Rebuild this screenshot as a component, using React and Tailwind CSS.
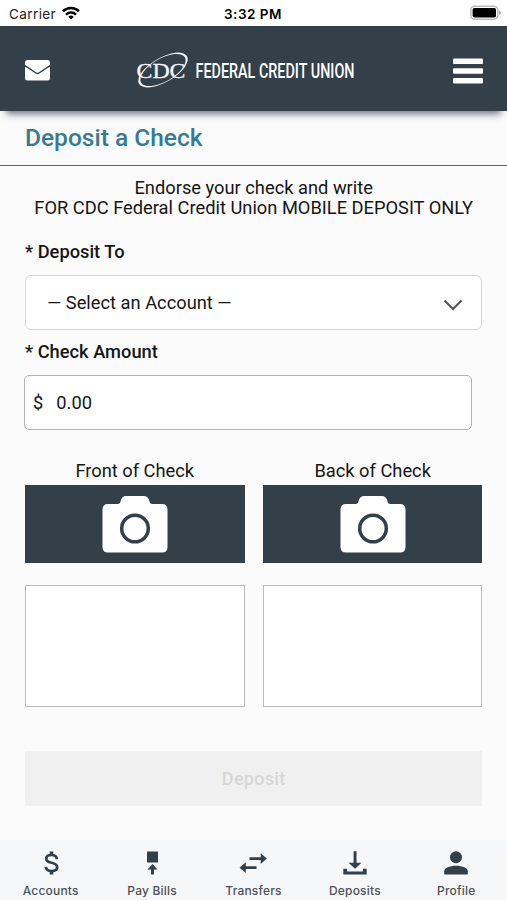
import { useState } from 'react'

const TABS = [
  { label: 'Accounts', icon: DollarIcon },
  { label: 'Pay Bills', icon: PayIcon },
  { label: 'Transfers', icon: TransferIcon },
  { label: 'Deposits', icon: DepositIcon },
  { label: 'Profile', icon: ProfileIcon },
]

function DollarIcon() {
  return (
    <svg width="24" height="24" viewBox="0 0 24 24" fill="none" stroke="currentColor" strokeWidth="2.7">
      <path d="M18 8.200C17.600 5.400 15.400 4 12.500 4 9.300 4 7.200 5.500 7.200 7.800c0 2.300 2 3.200 5.300 4 3.400.8 5.700 1.900 5.700 4.400 0 2.500-2.400 3.800-5.600 3.800-3.400 0-5.500-1.500-5.800-4.200" />
      <path d="M12.500.4v3.800M12.500 19.800v3.800" strokeWidth="3.6" />
    </svg>
  )
}

function PayIcon() {
  return (
    <svg width="24" height="24" viewBox="0 0 24 24" fill="currentColor">
      <path d="M7 .5h11v11H7zM12.500 13l5 5.500H14v5h-3v-5H7.500z" />
    </svg>
  )
}

function TransferIcon() {
  return (
    <svg width="30" height="24" viewBox="0 0 30 24" fill="currentColor">
      <path d="M11.500 6.200h11.200V2.200L28.800 7.600l-6.100 5.400V9.100H11.500zM18.500 15.200H7.800v-4L1.500 16.700l6.300 5.400v-4h10.700z" />
    </svg>
  )
}

function DepositIcon() {
  return (
    <svg width="24" height="24" viewBox="0 0 24 24" fill="currentColor">
      <path d="M10.600.3h2.900v11.500h5L12 17.700l-6.500-5.900h5.100zM.3 17.800h3.800v2.600h15.800v-2.600h3.800v5.700H.3z" />
    </svg>
  )
}

function ProfileIcon() {
  return (
    <svg width="24" height="24" viewBox="0 0 24 24" fill="currentColor">
      <circle cx="12" cy="6.2" r="6" />
      <path d="M.2 23.500v-3.300c0-3.200 5.300-5.500 11.800-5.500s11.800 2.300 11.800 5.500v3.300z" />
    </svg>
  )
}

function CameraIcon() {
  return (
    <svg width="66" height="58" viewBox="0 0 66 58">
      <path
        fill="#fff"
        d="M6 9h9.500c2 0 2.700-1 3-2.500C19 3 21 1 24.500 1h17C45 1 47 3 47.500 6.500 47.800 8 48.500 9 50.500 9H60q5.500 0 5.500 5.500v37.500q0 5.500-5.500 5.500H6q-5.500 0-5.500-5.500v-37.500Q.5 9 6 9z"
      />
      <circle cx="33" cy="33.5" r="13.3" fill="none" stroke="#333f49" strokeWidth="3.5" />
    </svg>
  )
}

function StatusBar() {
  return (
    <div className="grid h-[26px] grid-cols-3 items-center bg-white pr-1.5 pl-[9px] text-black">
      <div className="flex items-center gap-1.5">
        <span className="pt-0.5 font-[Inter] text-[13.5px] leading-5 tracking-[0.4px] text-[#222]">Carrier</span>
        <svg width="18" height="14" viewBox="0 0 18 14" fill="none" stroke="#000">
          <path d="M1 5.200a11.500 11.500 0 0 1 16 0" strokeWidth="2.6" />
          <path d="M4 8.600a7.200 7.200 0 0 1 10 0" strokeWidth="2.5" />
          <path d="M9 13.500 6.300 10.800a4 4 0 0 1 5.400 0z" fill="#000" stroke="none" />
        </svg>
      </div>
      <span className="pt-0.5 pr-1 text-center font-[Inter] text-[13.5px] leading-5 font-semibold tracking-[0.5px]">3:32 PM</span>
      <svg className="justify-self-end" width="32" height="16" viewBox="0 0 32 16">
        <rect x="1.8" y="1.2" width="27" height="13" rx="3.8" fill="#fff" stroke="#bbb" strokeWidth="1.5" />
        <rect x="3.6" y="3" width="23.4" height="9.5" rx="1.8" fill="#000" />
        <path d="M30 5.500q2 .8 2 2.300t-2 2.300z" fill="#aaa" />
      </svg>
    </div>
  )
}

function Header() {
  return (
    <header className="flex h-[85px] items-center justify-between bg-[#333f49] pt-1 pr-6 pl-[25px] shadow-[0_9px_7px_-6px_#6f7780]">
      <svg width="25" height="21" viewBox="0 0 25 21">
        <rect width="25" height="20.5" rx="2.5" fill="#fff" />
        <path d="M0 5.500 11 13q1.500 1 3 0L25 5.500" fill="none" stroke="#333f49" strokeWidth="1.5" />
      </svg>
      <svg className="mr-2 overflow-visible" width="230" height="42" viewBox="0 0 230 42">
        <text
          x="3.5"
          y="27.5"
          textLength="49"
          lengthAdjust="spacingAndGlyphs"
          fill="#f4f8fa"
          stroke="#f4f8fa"
          strokeWidth=".3"
          className="font-['Liberation_Serif'] text-[22px]"
        >
          CDC
        </text>
        <g transform="translate(2.5 -0.5) rotate(-30 27.5 20.5)">
          <path
            fill="#f4f8fa"
            fillRule="evenodd"
            d="M-.2 20.500a27.700 12.200 0 1 0 55.400 0a27.700 12.200 0 1 0-55.400 0zM2.200 20.500a25.300 11.500 0 1 0 50.600 0a25.300 11.500 0 1 0-50.600 0z"
          />
        </g>
        <text x="62.5" y="27.5" textLength="159" lengthAdjust="spacingAndGlyphs" fill="#fff" className="font-['Roboto'] text-[20.5px] font-medium">
          FEDERAL CREDIT UNION
        </text>
      </svg>
      <svg width="30" height="26" viewBox="0 0 30 26" fill="#fff">
        <rect width="30" height="5.5" y=".5" rx="1" />
        <rect width="30" height="5.5" y="10.2" rx="1" />
        <rect width="30" height="5.5" y="20" rx="1" />
      </svg>
    </header>
  )
}

function CheckSide({ label }) {
  return (
    <div className="w-[219.5px]">
      <p className="text-center leading-[28px]">{label}</p>
      <button className="flex h-[78px] w-full items-center justify-center bg-[#333f49]">
        <CameraIcon />
      </button>
      <div className="mt-[22px] h-[122px] border border-[#bcbcbc] bg-white" />
    </div>
  )
}

export default function App() {
  const [amount, setAmount] = useState('0.00')

  return (
    <div className="flex h-[900px] w-[507px] flex-col overflow-hidden bg-[#fbfbfb] font-[Roboto,sans-serif] text-[#151515]">
      <StatusBar />
      <Header />

      <h1 className="h-[55px] border-b border-[#5d6369] pl-[25px] text-[24.5px] leading-[54px] font-medium text-[#337b98]">
        Deposit a Check
      </h1>

      <main className="flex-1 pr-[24.6px] pl-[25px] text-[18.3px]">
        <p className="mt-3 -mx-px text-center leading-5 whitespace-nowrap">
          Endorse your check and write
          <br />
          FOR CDC Federal Credit Union MOBILE DEPOSIT ONLY
        </p>

        <p className="mt-6 leading-5 font-medium">* Deposit To</p>
        <div className="mt-[13px] flex h-[55px] items-center justify-between rounded-md border border-[#d6d6d6] bg-white pr-[18px] pl-[21px]">
          <span>— Select an Account —</span>
          <svg className="mt-1" width="20" height="12" viewBox="0 0 20 12" fill="none" stroke="#555" strokeWidth="2.2">
            <path d="m1.500 1.500 8.500 8.500 8.500-8.500" />
          </svg>
        </div>

        <p className="mt-3 leading-5 font-medium">* Check Amount</p>
        <div className="mt-[13px] -ml-px flex h-[55px] w-[448px] items-center rounded-[5px] border-[1.5px] border-[#b2b2b2] bg-white pl-2">
          <span>$</span>
          <input
            className="ml-[13px] w-40 bg-transparent outline-none"
            value={amount}
            onChange={(e) => setAmount(e.target.value)}
          />
        </div>

        <div className="mt-[27px] flex justify-between">
          <CheckSide label="Front of Check" />
          <CheckSide label="Back of Check" />
        </div>

        <button disabled className="mt-11 h-[55px] w-full bg-[#f0f0f0] text-[18px] font-medium tracking-[0.3px] text-[#d6d6d6]">
          Deposit
        </button>
      </main>

      <nav className="grid h-[60px] grid-cols-5 bg-[#f6f7f8]">
        {TABS.map((t) => (
          <button key={t.label} className="flex flex-col items-center pt-[11px] text-[#333f49]">
            <t.icon />
            <span className="mt-2 font-[Inter] text-[12px] leading-4 font-medium tracking-[0.2px] text-[#4d5256]">{t.label}</span>
          </button>
        ))}
      </nav>
    </div>
  )
}
